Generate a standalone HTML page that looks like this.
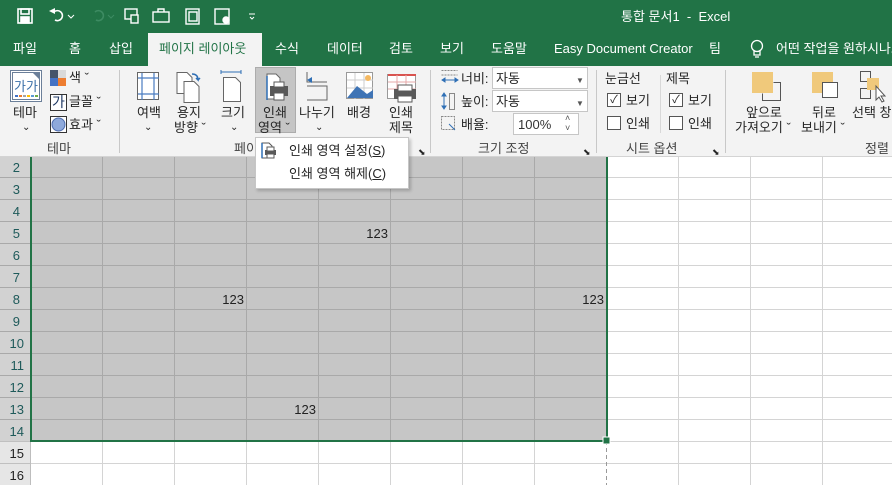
<!DOCTYPE html>
<html><head><meta charset="utf-8">
<style>
*{margin:0;padding:0;box-sizing:border-box}
body{width:892px;height:485px;overflow:hidden;position:relative;background:#fff;font-family:"Liberation Sans","Noto Sans CJK KR",sans-serif;font-size:13px;line-height:16px;color:#262626}
.a{position:absolute;white-space:nowrap}
.w{color:#fff}
.c{text-align:center}
.lbl{color:#444}
</style></head><body>
<!-- title bar -->
<div class="a" style="left:0;top:0;width:892px;height:66px;background:#217346"></div>
<svg class="a" style="left:0;top:0" width="270" height="33">
<g fill="none" stroke="#fff" stroke-width="1.6">
<rect x="18" y="9" width="14" height="14"/><rect x="21" y="9" width="8" height="5"/><rect x="21" y="17" width="8" height="6" fill="#fff"/>
<path d="M54 12 a5 5 0 1 1 1 8"/>
</g>
<path d="M49 11 l6 -3 v6z" fill="#fff"/>
<path d="M68 15 l3 3 3-3" stroke="#fff" fill="none"/>
<path d="M96 20 a5 5 0 1 0 -1 -8" stroke="#3d8b62" fill="none" stroke-width="1.6"/>
<path d="M108 15 l3 3 3-3" stroke="#3d8b62" fill="none"/>
<g fill="none" stroke="#fff" stroke-width="1.4">
<rect x="125" y="9" width="12" height="10"/><rect x="131" y="15" width="7" height="8" fill="#217346"/>
<rect x="153" y="12" width="16" height="10"/><path d="M158 12 v-3 h6 v3"/>
<rect x="186" y="9" width="13" height="15"/><rect x="189" y="12" width="8" height="9"/>
<rect x="215" y="9" width="14" height="15"/><circle cx="226" cy="20" r="3" fill="#fff"/>
</g>
<path d="M249 14 h6 M250 17 l2 2 2-2" stroke="#fff" fill="none"/>
</svg>
<div class="a w" style="left:621px;top:9px;font-size:13px">통합 문서1 &nbsp;-&nbsp; Excel</div>
<!-- tabs -->
<div class="a" style="left:148px;top:33px;width:114px;height:34px;background:#f3f3f3"></div>
<div class="a w" style="left:13px;top:41px">파일</div>
<div class="a w" style="left:69px;top:41px">홈</div>
<div class="a w" style="left:109px;top:41px">삽입</div>
<div class="a" style="left:159px;top:41px;color:#217346">페이지 레이아웃</div>
<div class="a w" style="left:275px;top:41px">수식</div>
<div class="a w" style="left:327px;top:41px">데이터</div>
<div class="a w" style="left:389px;top:41px">검토</div>
<div class="a w" style="left:440px;top:41px">보기</div>
<div class="a w" style="left:491px;top:41px">도움말</div>
<div class="a w" style="left:554px;top:41px">Easy Document Creator</div>
<div class="a w" style="left:709px;top:41px">팀</div>
<svg class="a" style="left:749px;top:39px" width="16" height="20"><circle cx="8" cy="7" r="5.5" fill="none" stroke="#fff" stroke-width="1.3"/><path d="M5 12 v4 h6 v-4 M6 18 h4" stroke="#fff" fill="none" stroke-width="1.3"/></svg>
<div class="a w" style="left:776px;top:41px">어떤 작업을 원하시나요</div>
<!-- ribbon -->
<div class="a" style="left:0;top:66px;width:892px;height:91px;background:#f3f3f3"></div>
<div class="a" style="left:119px;top:70px;width:1px;height:83px;background:#c8c8c8"></div>
<div class="a" style="left:430px;top:70px;width:1px;height:83px;background:#c8c8c8"></div>
<div class="a" style="left:596px;top:70px;width:1px;height:83px;background:#c8c8c8"></div>
<div class="a" style="left:725px;top:70px;width:1px;height:83px;background:#c8c8c8"></div>
<div class="a" style="left:660px;top:75px;width:1px;height:58px;background:#d8d8d8"></div>
<!-- theme group -->
<svg class="a" style="left:10px;top:70px" width="110" height="64">
<rect x="0.5" y="0.5" width="31" height="31" fill="#fff" stroke="#6b7f99"/><rect x="2.5" y="2.5" width="27" height="27" fill="#fff" stroke="#6b7f99"/>
<path d="M23 3 l6 6 v-6z" fill="#6b7f99"/>
<text x="4" y="21" font-size="13" fill="#3a6fa8" font-family="Noto Sans CJK KR">가가</text>
<rect x="5" y="25" width="3" height="2" fill="#4472c4"/><rect x="9" y="25" width="3" height="2" fill="#ed7d31"/><rect x="13" y="25" width="3" height="2" fill="#a5a5a5"/><rect x="17" y="25" width="3" height="2" fill="#ffc000"/><rect x="21" y="25" width="3" height="2" fill="#5b9bd5"/><rect x="25" y="25" width="3" height="2" fill="#70ad47"/>
<rect x="40" y="0" width="8" height="8" fill="#44546a"/><rect x="48" y="0" width="8" height="8" fill="#d9d9d9"/><rect x="40" y="8" width="8" height="8" fill="#4472c4"/><rect x="48" y="8" width="8" height="8" fill="#ed7d31"/>
<rect x="40.5" y="24.5" width="16" height="16" fill="#fff" stroke="#333"/>
<rect x="40.5" y="46.5" width="16" height="16" fill="#fff" stroke="#333"/><circle cx="48.5" cy="54.5" r="6.5" fill="#8ea9db" stroke="#4d6db0"/>
</svg>
<div class="a" style="left:52px;top:94px;font-size:14px;color:#1f3864">가</div>
<div class="a" style="left:69px;top:70px">색 ˇ</div>
<div class="a" style="left:69px;top:94px">글꼴 ˇ</div>
<div class="a" style="left:69px;top:117px">효과 ˇ</div>
<div class="a" style="left:13px;top:105px">테마</div>
<div class="a" style="left:22px;top:120px;font-size:10px">⌄</div>
<div class="a lbl" style="left:47px;top:141px">테마</div>
<!-- page setup -->
<div class="a" style="left:255px;top:67px;width:41px;height:66px;background:#c5c5c5;border:1px solid #acacac"></div>
<svg class="a" style="left:130px;top:70px" width="300" height="36">
<rect x="7.5" y="2.5" width="21" height="27" fill="#fff" stroke="#666"/>
<path d="M12 3 v27 M24 3 v27 M8 8 h21 M8 24 h21" stroke="#4a7cc0" stroke-width="1.2"/>
<path d="M47 2.5 h10 l5 5 v16 h-15z" fill="#fff" stroke="#666"/>
<path d="M54 11.5 h10 l5 5 v16 h-15z" fill="#fff" stroke="#666"/>
<path d="M62 4 q6 0 6 6 l-2 -2 m2 2 l2 -2" stroke="#2f6fb5" fill="none" stroke-width="1.5"/>
<path d="M91 2 h20 M91 0 v4 M111 0 v4" stroke="#2f6fb5"/>
<path d="M93.5 7.5 h12 l5 5 v19 h-17z" fill="#fff" stroke="#666"/>
<path d="M137 4 h9 l4 4 v21 h-13z" fill="#fff" stroke="#666"/><path d="M137 6 v24" stroke="#2f6fb5" stroke-width="1.5"/>
<rect x="140" y="16" width="18" height="10" fill="#595959"/><rect x="144" y="12" width="10" height="5" fill="#fff" stroke="#595959"/><rect x="144" y="23" width="10" height="7" fill="#fff" stroke="#595959"/>
<path d="M177 2 v10 h20 M177 16 h20 v14 h-20" stroke="#666" fill="none"/><path d="M177 10 l5 -3 v6z" fill="#2f6fb5"/>
<rect x="216.5" y="2.5" width="26" height="26" fill="#fff" stroke="#999"/><path d="M217 10 h26 M217 18 h26 M225 3 v26 M234 3 v26" stroke="#ccc"/><path d="M217 28 l10 -12 l10 8 l6 -4 v8z" fill="#3f74b5"/><circle cx="238" cy="8" r="3" fill="#f4b860"/>
<rect x="257.5" y="4.5" width="28" height="24" fill="#fff" stroke="#999"/><path d="M258 5 h28" stroke="#d9534f" stroke-width="2"/><path d="M258 12 h28 M258 19 h28 M267 5 v24 M276 5 v24" stroke="#e6a8a8"/>
<rect x="264" y="19" width="22" height="10" fill="#595959"/><rect x="268" y="15" width="14" height="6" fill="#fff" stroke="#595959"/><rect x="268" y="26" width="14" height="6" fill="#fff" stroke="#595959"/>
</svg>
<div class="a" style="left:137px;top:105px">여백</div>
<div class="a" style="left:144px;top:120px;font-size:10px">⌄</div>
<div class="a" style="left:177px;top:105px">용지</div>
<div class="a" style="left:174px;top:120px">방향 ˇ</div>
<div class="a" style="left:221px;top:105px">크기</div>
<div class="a" style="left:230px;top:120px;font-size:10px">⌄</div>
<div class="a" style="left:263px;top:105px">인쇄</div>
<div class="a" style="left:258px;top:120px">영역 ˇ</div>
<div class="a" style="left:299px;top:105px">나누기</div>
<div class="a" style="left:315px;top:120px;font-size:10px">⌄</div>
<div class="a" style="left:347px;top:105px">배경</div>
<div class="a" style="left:389px;top:105px">인쇄</div>
<div class="a" style="left:389px;top:120px">제목</div>
<div class="a lbl" style="left:234px;top:141px">페이</div>
<div class="a" style="left:418px;top:144px;font-size:9px">⬊</div>
<!-- scale -->
<svg class="a" style="left:440px;top:69px" width="20" height="64">
<path d="M1.5 1.5 h16 M1.5 6 h16" stroke="#888" fill="none" stroke-dasharray="2 1"/><path d="M2 11 h16 M2 11 l3 -2 v4z M18 11 l-3 -2 v4z" stroke="#2f6fb5" fill="#2f6fb5"/>
<path d="M4 24 v16 M4 24 l-2 3 h4z M4 40 l-2 -3 h4z" stroke="#2f6fb5" fill="#2f6fb5"/><rect x="9.5" y="24.5" width="5" height="16" fill="none" stroke="#888"/>
<rect x="1.5" y="47.5" width="13" height="13" fill="none" stroke="#888" stroke-dasharray="2 1"/><path d="M9 55 l6 6" stroke="#2f6fb5"/>
</svg>
<div class="a" style="left:461px;top:71px">너비:</div>
<div class="a" style="left:461px;top:94px">높이:</div>
<div class="a" style="left:461px;top:117px">배율:</div>
<div class="a" style="left:492px;top:67px;width:96px;height:22px;background:#fff;border:1px solid #c6c6c6"></div>
<div class="a" style="left:492px;top:90px;width:96px;height:22px;background:#fff;border:1px solid #c6c6c6"></div>
<div class="a" style="left:513px;top:113px;width:66px;height:22px;background:#fff;border:1px solid #c6c6c6"></div>
<div class="a" style="left:496px;top:71px">자동</div>
<div class="a" style="left:496px;top:94px">자동</div>
<div class="a" style="left:518px;top:117px;color:#333">100%</div>
<div class="a" style="left:576px;top:73px;font-size:8px;color:#555">▼</div>
<div class="a" style="left:576px;top:96px;font-size:8px;color:#555">▼</div>
<div class="a" style="left:565px;top:113px;font-size:9px;color:#555;line-height:10px">˄<br>˅</div>
<div class="a lbl" style="left:478px;top:141px">크기 조정</div>
<div class="a" style="left:583px;top:144px;font-size:9px">⬊</div>
<!-- sheet options -->
<div class="a" style="left:605px;top:71px">눈금선</div>
<div class="a" style="left:666px;top:71px">제목</div>
<div class="a" style="left:607px;top:93px;width:14px;height:14px;border:1px solid #555;background:#fff;font-size:11px;line-height:12px;text-align:center">✓</div>
<div class="a" style="left:669px;top:93px;width:14px;height:14px;border:1px solid #555;background:#fff;font-size:11px;line-height:12px;text-align:center">✓</div>
<div class="a" style="left:607px;top:116px;width:14px;height:14px;border:1px solid #555;background:#fff"></div>
<div class="a" style="left:669px;top:116px;width:14px;height:14px;border:1px solid #555;background:#fff"></div>
<div class="a" style="left:626px;top:93px">보기</div>
<div class="a" style="left:688px;top:93px">보기</div>
<div class="a" style="left:626px;top:116px">인쇄</div>
<div class="a" style="left:688px;top:116px">인쇄</div>
<div class="a lbl" style="left:626px;top:141px">시트 옵션</div>
<div class="a" style="left:712px;top:144px;font-size:9px">⬊</div>
<!-- arrange -->
<svg class="a" style="left:750px;top:70px" width="142" height="40">
<rect x="2" y="2" width="21" height="21" fill="#f0c97b"/><path d="M23.5 12.5 h7 v18 h-18 v-7" fill="none" stroke="#555"/>
<rect x="72.5" y="12.5" width="15" height="15" fill="#fff" stroke="#555"/><path d="M62 2 h21 v10 h-11 v11 h-10z" fill="#f0c97b"/>
<path d="M110.5 1.5 h10 v10 h-10z M110.5 18.5 h10 v10 h-10z" fill="none" stroke="#555"/><rect x="117" y="8" width="12" height="12" fill="#f0c97b"/><path d="M126 16 v14 l3 -3 l3 5 l2 -1 l-3 -5 h4z" fill="#fff" stroke="#555"/>
</svg>
<div class="a" style="left:746px;top:105px">앞으로</div>
<div class="a" style="left:735px;top:120px">가져오기 ˇ</div>
<div class="a" style="left:812px;top:105px">뒤로</div>
<div class="a" style="left:801px;top:120px">보내기 ˇ</div>
<div class="a" style="left:852px;top:105px">선택 창</div>
<div class="a lbl" style="left:865px;top:141px">정렬</div>
<div class="a" style="left:0;top:156px;width:892px;height:1px;background:#d4d4d4"></div>
<!-- grid -->
<svg class="a" style="left:0;top:157px" width="892" height="328">
<rect x="0" y="0" width="30" height="328" fill="#e6e6e6"/>
<rect x="0" y="0" width="30" height="284" fill="#d2d2d2"/>
<rect x="30" y="0" width="576" height="284" fill="#c6c6c6"/>
<g stroke="#d4d4d4" stroke-width="1">
<path d="M102.5 284 V328 M174.5 284 V328 M246.5 284 V328 M318.5 284 V328 M390.5 284 V328 M462.5 284 V328 M534.5 284 V328 M678.5 0 V328 M750.5 0 V328 M822.5 0 V328"/>
<path d="M606 20.5 H892 M606 42.5 H892 M606 64.5 H892 M606 86.5 H892 M606 108.5 H892 M606 130.5 H892 M606 152.5 H892 M606 174.5 H892 M606 196.5 H892 M606 218.5 H892 M606 240.5 H892 M606 262.5 H892 M606 284.5 H892 M30 306.5 H892"/>
</g>
<g stroke="#c0c0c0"><path d="M0 306.5 H30 M0 284.5 H30"/></g>
<g stroke="#a9a9a9" stroke-width="1">
<path d="M102.5 0 V284 M174.5 0 V284 M246.5 0 V284 M318.5 0 V284 M390.5 0 V284 M462.5 0 V284 M534.5 0 V284"/>
<path d="M0 20.5 H606 M0 42.5 H606 M0 64.5 H606 M0 86.5 H606 M0 108.5 H606 M0 130.5 H606 M0 152.5 H606 M0 174.5 H606 M0 196.5 H606 M0 218.5 H606 M0 240.5 H606 M0 262.5 H606"/>
</g>
<path d="M30.5 0 V328" stroke="#bdbdbd"/>
<path d="M606.5 284 V328" stroke="#999" stroke-dasharray="4 3"/>
<rect x="30" y="0" width="2" height="285" fill="#217346"/>
<rect x="30" y="283" width="574" height="2" fill="#217346"/>
<rect x="606" y="0" width="2" height="281" fill="#217346"/>
<rect x="603" y="280" width="7" height="7" fill="#217346" stroke="#fff"/>
<g font-size="13" fill="#1e5a5a" text-anchor="end" font-family="Liberation Sans">
<text x="20" y="15">2</text><text x="20" y="37">3</text><text x="20" y="59">4</text><text x="20" y="81">5</text><text x="20" y="103">6</text><text x="20" y="125">7</text><text x="20" y="147">8</text><text x="20" y="169">9</text><text x="24" y="191">10</text><text x="24" y="213">11</text><text x="24" y="235">12</text><text x="24" y="257">13</text><text x="24" y="279">14</text>
</g>
<g font-size="13" fill="#222" text-anchor="end" font-family="Liberation Sans">
<text x="24" y="301">15</text><text x="24" y="323">16</text>
<text x="388" y="81">123</text><text x="244" y="147">123</text><text x="604" y="147">123</text><text x="316" y="257">123</text>
</g>
</svg>
<!-- dropdown menu -->
<div class="a" style="left:255px;top:137px;width:154px;height:52px;background:#fff;border:1px solid #c6c6c6;box-shadow:2px 2px 3px rgba(0,0,0,.2)"></div>
<svg class="a" style="left:259px;top:142px" width="20" height="18"><path d="M3 1 h7 l3 3 v12 h-10z" fill="#fff" stroke="#555"/><path d="M3 1 v15" stroke="#2f6fb5" stroke-width="1.5"/><rect x="6" y="8" width="11" height="5" fill="#595959"/><rect x="8" y="5" width="7" height="4" fill="#fff" stroke="#595959"/><rect x="8" y="12" width="7" height="4" fill="#fff" stroke="#595959"/></svg>
<div class="a" style="left:289px;top:143px">인쇄 영역 설정(<u>S</u>)</div>
<div class="a" style="left:289px;top:166px">인쇄 영역 해제(<u>C</u>)</div>
</body></html>
